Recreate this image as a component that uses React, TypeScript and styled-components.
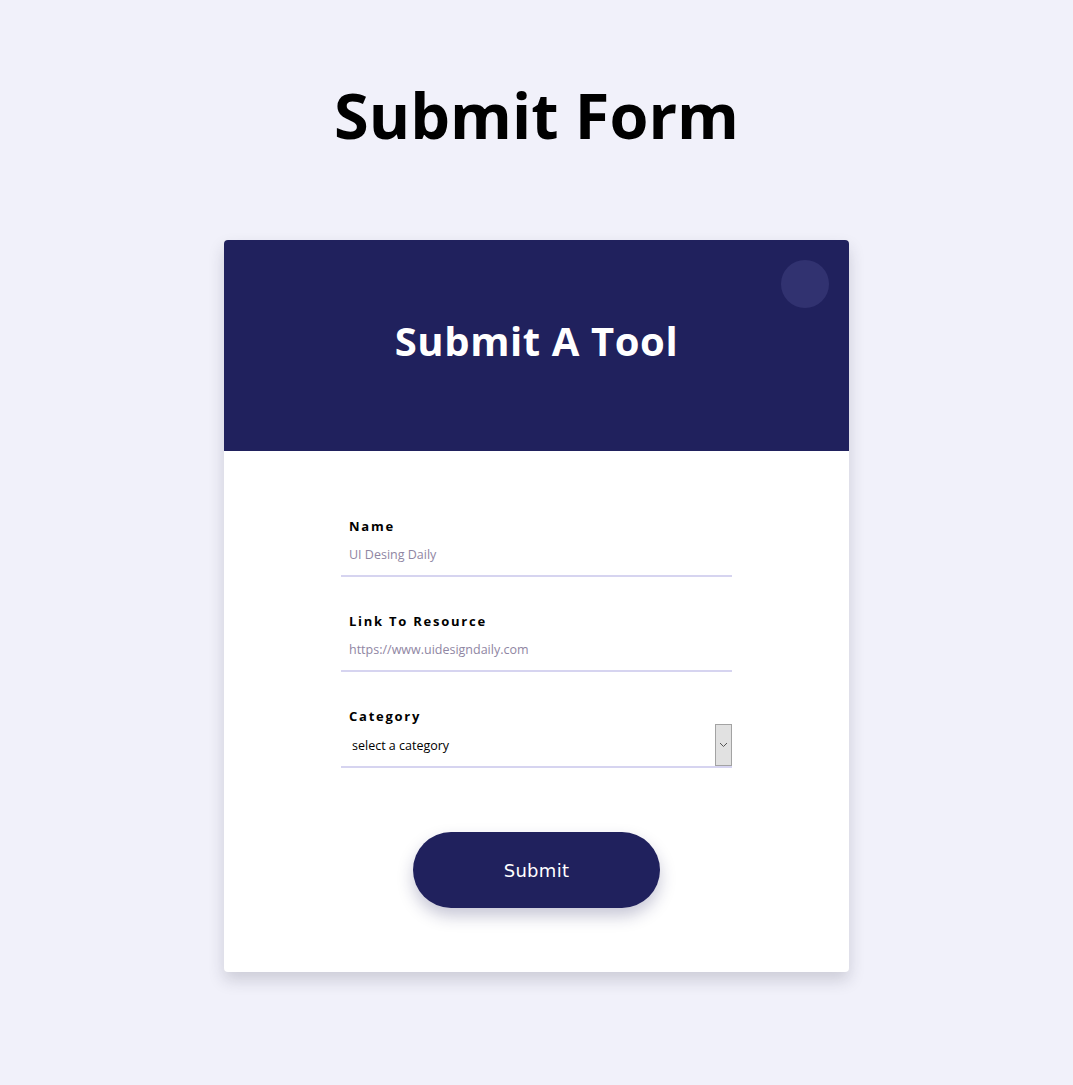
import React from "react";
import styled, { createGlobalStyle } from "styled-components";

const GlobalStyle = createGlobalStyle`
  html, body {
    margin: 0;
    padding: 0;
    background: #f1f1fa;
    font-family: "Open Sans", "Noto Sans", sans-serif;
  }
  * { box-sizing: border-box; }
`;

const Page = styled.div`
  min-height: 1085px;
  display: flex;
  flex-direction: column;
  align-items: center;
  padding-top: 75px;
`;

const PageTitle = styled.h1`
  margin: 0;
  font-size: 63px;
  line-height: 80px;
  font-weight: 700;
  color: #000;
`;

const Card = styled.div`
  margin-top: 85px;
  width: 625px;
  background: #fff;
  border-radius: 4px;
  overflow: hidden;
  box-shadow: 0 8px 16px rgba(40, 40, 60, 0.18);
`;

const Header = styled.div`
  position: relative;
  height: 211px;
  background: #20215d;
  display: flex;
  align-items: center;
  justify-content: center;
  padding-bottom: 10px;
`;

const Dot = styled.span`
  position: absolute;
  top: 20px;
  right: 20px;
  width: 48px;
  height: 48px;
  border-radius: 50%;
  background: #313270;
`;

const HeaderTitle = styled.h2`
  margin: 0;
  color: #fff;
  font-size: 40px;
  line-height: 50px;
  font-weight: 700;
  letter-spacing: 0.6px;
`;

const Form = styled.form`
  display: flex;
  flex-direction: column;
  align-items: center;
  padding: 67px 0 64px;
`;

const Fields = styled.div`
  width: 391px;
  display: flex;
  flex-direction: column;
  gap: 36px;
`;

const Field = styled.div`
  display: flex;
  flex-direction: column;
`;

const Label = styled.label`
  padding-left: 8px;
  font-size: 13px;
  line-height: 16px;
  font-weight: 700;
  letter-spacing: 1.75px;
  color: #000;
`;

const Input = styled.input`
  height: 43px;
  border: none;
  border-bottom: 2px solid #d6d4f0;
  padding: 0 8px;
  outline: none;
  font-family: "Open Sans", "Noto Sans", sans-serif;
  font-size: 12.5px;
  color: #333;
  background: transparent;
  &::placeholder {
    color: #8f86a3;
  }
`;

const SelectRow = styled.div`
  display: flex;
  height: 44px;
  border-bottom: 2px solid #d6d4f0;
`;

const Select = styled.select`
  flex: 1;
  appearance: none;
  -webkit-appearance: none;
  border: none;
  outline: none;
  background: transparent;
  padding: 0 11px;
  font-family: "Open Sans", "Noto Sans", sans-serif;
  font-size: 12.5px;
  color: #000;
`;

const ArrowBox = styled.span`
  width: 17px;
  height: 42px;
  background: #e1e1e1;
  border: 1px solid #a3a3a3;
  display: flex;
  align-items: center;
  justify-content: center;
`;

const SubmitButton = styled.button`
  margin-top: 64px;
  width: 247px;
  height: 76px;
  border: none;
  border-radius: 38px;
  background: #20215d;
  color: #fff;
  font-family: "DejaVu Sans", "Verdana", sans-serif;
  font-size: 18px;
  letter-spacing: 0.3px;
  box-shadow: 0 8px 16px rgba(32, 33, 93, 0.25);
  cursor: pointer;
`;

export default function App() {
  return (
    <>
      <GlobalStyle />
      <Page>
        <PageTitle>Submit Form</PageTitle>
        <Card>
          <Header>
            <Dot />
            <HeaderTitle>Submit A Tool</HeaderTitle>
          </Header>
          <Form onSubmit={(e) => e.preventDefault()}>
            <Fields>
              <Field>
                <Label htmlFor="name">Name</Label>
                <Input id="name" placeholder="UI Desing Daily" />
              </Field>
              <Field>
                <Label htmlFor="link">Link To Resource</Label>
                <Input id="link" placeholder="https://www.uidesigndaily.com" />
              </Field>
              <Field>
                <Label htmlFor="cat">Category</Label>
                <SelectRow>
                  <Select id="cat" defaultValue="">
                    <option value="">select a category</option>
                    <option value="design">Design</option>
                    <option value="dev">Development</option>
                  </Select>
                  <ArrowBox>
                    <svg width="9" height="6" viewBox="0 0 9 6" fill="none">
                      <path d="M1 1l3.5 3.5L8 1" stroke="#555" strokeWidth="1" />
                    </svg>
                  </ArrowBox>
                </SelectRow>
              </Field>
            </Fields>
            <SubmitButton type="submit">Submit</SubmitButton>
          </Form>
        </Card>
      </Page>
    </>
  );
}
